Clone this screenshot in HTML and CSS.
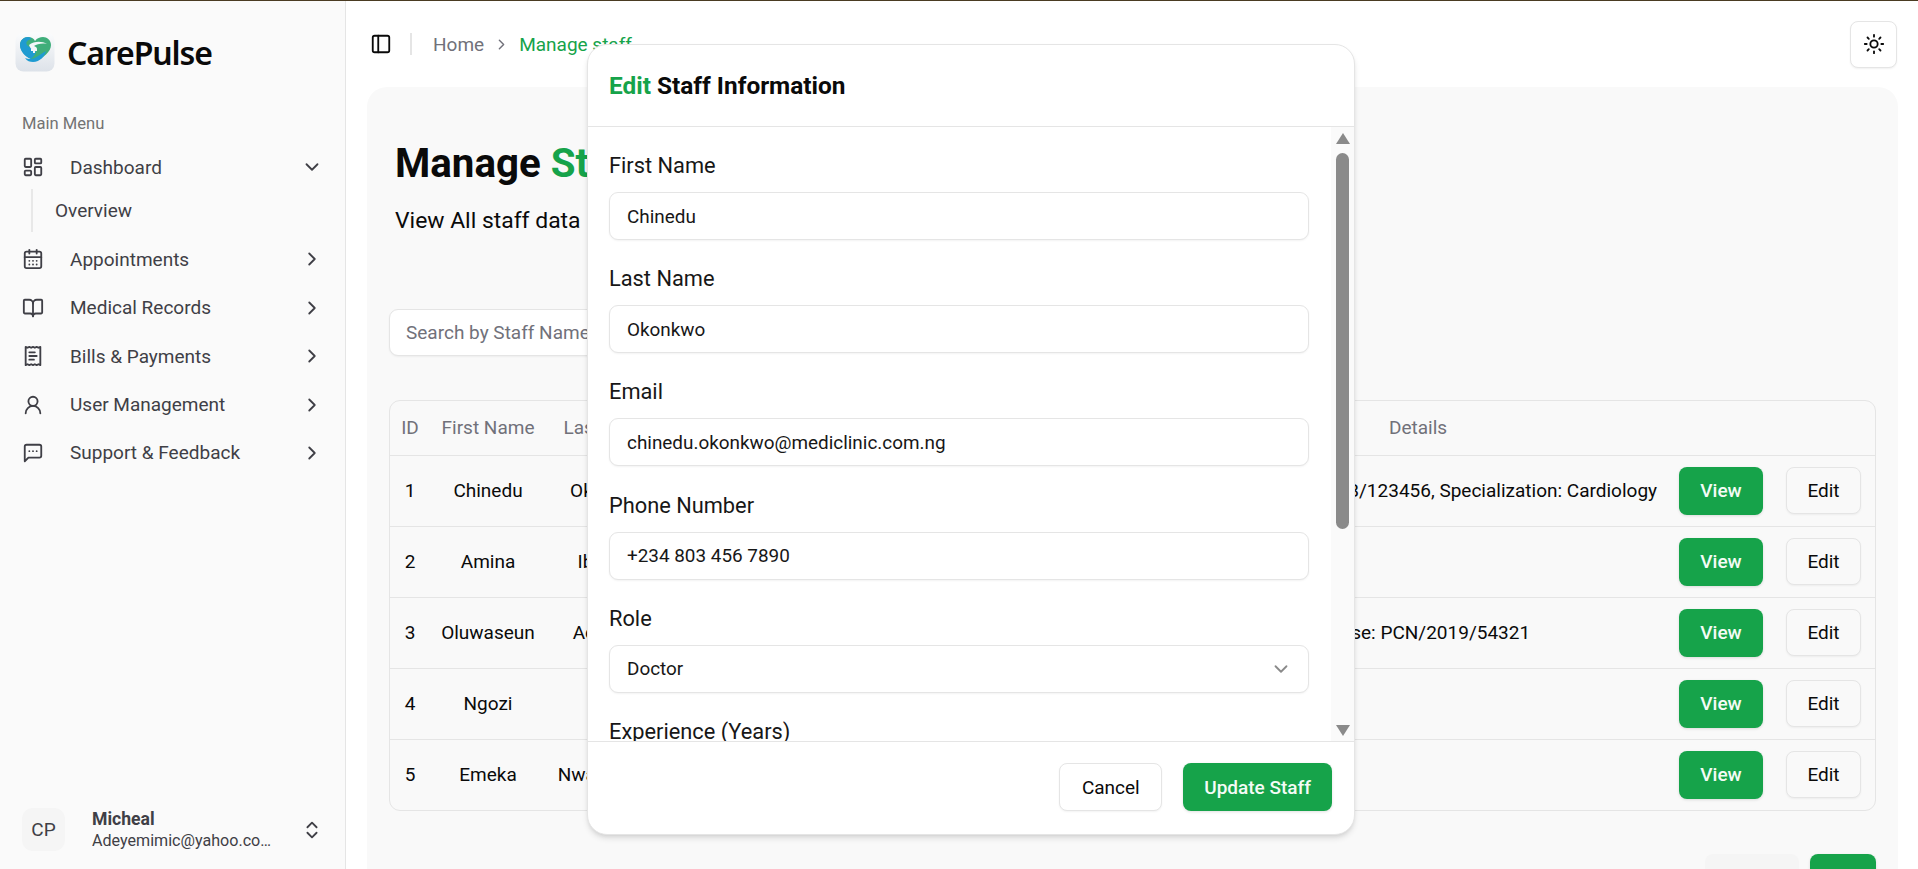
FILE: index.html
```html
<!DOCTYPE html>
<html lang="en">
<head>
    <meta charset="UTF-8">
    <meta name="viewport" content="width=device-width, initial-scale=1.0">
    <title>CarePulse - Manage staff</title>
    <link rel="stylesheet" href="styles.css">
</head>
<body>
    <div class="app">
        <aside class="sidebar">
            <div class="brand">
                <svg class="brand-logo" viewBox="0 0 40 40">
                    <defs>
                        <linearGradient id="tile" x1="0" y1="0" x2="0" y2="1">
                            <stop offset="0" stop-color="#fbfcfd"/>
                            <stop offset="1" stop-color="#dde2e9"/>
                        </linearGradient>
                    </defs>
                    <rect x="0.5" y="0.5" width="39" height="39" rx="8" fill="url(#tile)"/>
                    <path d="M20 29C13 26 5 20 5 13c0-5 4-8 8-8 3 0 6 1.500 7 4 2-3 5-4 8-4 4 0 8 3 8 8 0 7-8 13-16 16z" fill="#3fae7a"/>
                    <path d="M5 13c0-5 4-8 8-8 2 0 3 1 3 2-3 1-6 3-4 6 2 3 7 3 9 7-1 3-3 5-5 7C10 25 5 19 5 13z" fill="#1f9bd1"/>
                    <path d="M14 13c5-4 13-4 18-1-5-1-10 0-13 2 3 1 4 3 2 5-3 1-6-3-7-6z" fill="#f3f6f8"/>
                    <path d="M10 26c5 2 9 1 13-2l8-5c-1 5-6 11-13 11-3 0-6-1-8-4z" fill="#1f9bd1"/>
                    <path d="M18 15h2v2h2v2h-2v2h-2v-2h-2v-2h2z" fill="#f3f6f8"/>
                </svg>
                <span class="brand-name">CarePulse</span>
            </div>

            <p class="menu-title">Main Menu</p>
            <ul class="menu">
                <li>
                    <a class="menu-item">
                        <svg class="icon" viewBox="0 0 24 24"><rect x="3" y="3" width="7" height="9" rx="1"/><rect x="14" y="3" width="7" height="5" rx="1"/><rect x="14" y="12" width="7" height="9" rx="1"/><rect x="3" y="16" width="7" height="5" rx="1"/></svg>
                        <span class="menu-label">Dashboard</span>
                        <svg class="icon chevron" viewBox="0 0 24 24"><path d="m6 9 6 6 6-6"/></svg>
                    </a>
                    <div class="submenu"><a>Overview</a></div>
                </li>
                <li>
                    <a class="menu-item">
                        <svg class="icon" viewBox="0 0 24 24"><path d="M8 2v4"/><path d="M16 2v4"/><rect x="3" y="4" width="18" height="18" rx="2"/><path d="M3 10h18"/><path d="M8 14h.01"/><path d="M12 14h.01"/><path d="M16 14h.01"/><path d="M8 18h.01"/><path d="M12 18h.01"/><path d="M16 18h.01"/></svg>
                        <span class="menu-label">Appointments</span>
                        <svg class="icon chevron" viewBox="0 0 24 24"><path d="m9 18 6-6-6-6"/></svg>
                    </a>
                </li>
                <li>
                    <a class="menu-item">
                        <svg class="icon" viewBox="0 0 24 24"><path d="M12 7v14"/><path d="M3 18a1 1 0 0 1-1-1V4a1 1 0 0 1 1-1h5a4 4 0 0 1 4 4 4 4 0 0 1 4-4h5a1 1 0 0 1 1 1v13a1 1 0 0 1-1 1h-6a3 3 0 0 0-3 3 3 3 0 0 0-3-3z"/></svg>
                        <span class="menu-label">Medical Records</span>
                        <svg class="icon chevron" viewBox="0 0 24 24"><path d="m9 18 6-6-6-6"/></svg>
                    </a>
                </li>
                <li>
                    <a class="menu-item">
                        <svg class="icon" viewBox="0 0 24 24"><path d="M4 2v20l2-1 2 1 2-1 2 1 2-1 2 1 2-1 2 1V2l-2 1-2-1-2 1-2-1-2 1-2-1-2 1Z"/><path d="M14 8H8"/><path d="M16 12H8"/><path d="M13 16H8"/></svg>
                        <span class="menu-label">Bills &amp; Payments</span>
                        <svg class="icon chevron" viewBox="0 0 24 24"><path d="m9 18 6-6-6-6"/></svg>
                    </a>
                </li>
                <li>
                    <a class="menu-item">
                        <svg class="icon" viewBox="0 0 24 24"><circle cx="12" cy="8" r="5"/><path d="M20 21a8 8 0 0 0-16 0"/></svg>
                        <span class="menu-label">User Management</span>
                        <svg class="icon chevron" viewBox="0 0 24 24"><path d="m9 18 6-6-6-6"/></svg>
                    </a>
                </li>
                <li>
                    <a class="menu-item">
                        <svg class="icon" viewBox="0 0 24 24"><path d="M21 15a2 2 0 0 1-2 2H7l-4 4V5a2 2 0 0 1 2-2h14a2 2 0 0 1 2 2z"/><path d="M8 10h.01"/><path d="M12 10h.01"/><path d="M16 10h.01"/></svg>
                        <span class="menu-label">Support &amp; Feedback</span>
                        <svg class="icon chevron" viewBox="0 0 24 24"><path d="m9 18 6-6-6-6"/></svg>
                    </a>
                </li>
            </ul>

            <div class="account">
                <div class="avatar">CP</div>
                <div class="account-info">
                    <div class="account-name">Micheal</div>
                    <div class="account-email">Adeyemimic@yahoo.com</div>
                </div>
                <svg class="icon" viewBox="0 0 24 24"><path d="m7 15 5 5 5-5"/><path d="m7 9 5-5 5 5"/></svg>
            </div>
        </aside>

        <main class="main">
            <header class="topbar">
                <svg class="icon icon-dark" viewBox="0 0 24 24"><rect x="3" y="3" width="18" height="18" rx="2"/><path d="M9 3v18"/></svg>
                <span class="topbar-sep"></span>
                <nav class="crumbs">
                    <span>Home</span>
                    <svg class="icon crumb-arrow" viewBox="0 0 24 24"><path d="m9 18 6-6-6-6"/></svg>
                    <span class="crumb-current">Manage staff</span>
                </nav>
                <button class="theme-btn">
                    <svg class="icon icon-dark" viewBox="0 0 24 24"><circle cx="12" cy="12" r="4"/><path d="M12 2v2"/><path d="M12 20v2"/><path d="m4.930 4.930 1.410 1.410"/><path d="m17.660 17.660 1.410 1.410"/><path d="M2 12h2"/><path d="M20 12h2"/><path d="m6.340 17.660-1.410 1.410"/><path d="m19.070 4.930-1.410 1.410"/></svg>
                </button>
            </header>

            <section class="panel">
                <div class="page-head">
                    <h1>Manage <span class="green">Staff</span></h1>
                    <p>View All staff data</p>
                </div>
                <input class="search" type="text" placeholder="Search by Staff Name">

                <div class="table-wrap">
                    <table class="staff-table">
                        <colgroup>
                            <col class="col-id"><col class="col-first"><col class="col-last"><col class="col-email"><col class="col-role"><col class="col-details"><col>
                        </colgroup>
                        <thead>
                            <tr><th>ID</th><th>First Name</th><th>Last Name</th><th>Email</th><th>Role</th><th>Details</th><th></th></tr>
                        </thead>
                        <tbody>
                            <tr>
                                <td>1</td><td>Chinedu</td><td>Okonkwo</td><td>chinedu.okonkwo@mediclinic.com.ng</td><td>Doctor</td>
                                <td>License: MDCN/2018/123456, Specialization: Cardiology</td>
                                <td><div class="row-actions"><button class="btn btn-green">View</button><button class="btn btn-plain">Edit</button></div></td>
                            </tr>
                            <tr>
                                <td>2</td><td>Amina</td><td>Ibrahim</td><td>amina.ibrahim@mediclinic.com.ng</td><td>Nurse</td>
                                <td></td>
                                <td><div class="row-actions"><button class="btn btn-green">View</button><button class="btn btn-plain">Edit</button></div></td>
                            </tr>
                            <tr>
                                <td>3</td><td>Oluwaseun</td><td>Adebayo</td><td>oluwaseun.adebayo@mediclinic.com.ng</td><td>Pharmacist</td>
                                <td>License: PCN/2019/54321</td>
                                <td><div class="row-actions"><button class="btn btn-green">View</button><button class="btn btn-plain">Edit</button></div></td>
                            </tr>
                            <tr>
                                <td>4</td><td>Ngozi</td><td>Eze</td><td>ngozi.eze@mediclinic.com.ng</td><td>Admin</td>
                                <td></td>
                                <td><div class="row-actions"><button class="btn btn-green">View</button><button class="btn btn-plain">Edit</button></div></td>
                            </tr>
                            <tr>
                                <td>5</td><td>Emeka</td><td>Nwachukwu</td><td>emeka.nwachukwu@mediclinic.com.ng</td><td>Admin</td>
                                <td></td>
                                <td><div class="row-actions"><button class="btn btn-green">View</button><button class="btn btn-plain">Edit</button></div></td>
                            </tr>
                        </tbody>
                    </table>
                </div>

                <div class="pager">
                    <button class="btn pager-prev">Previous</button>
                    <button class="btn btn-green pager-next">Next</button>
                </div>
            </section>
        </main>

        <div class="modal">
            <div class="modal-head">
                <h2><span class="green">Edit</span> Staff Information</h2>
            </div>
            <div class="modal-body">
                <div class="field">
                    <label>First Name</label>
                    <div class="control">Chinedu</div>
                </div>
                <div class="field">
                    <label>Last Name</label>
                    <div class="control">Okonkwo</div>
                </div>
                <div class="field">
                    <label>Email</label>
                    <div class="control">chinedu.okonkwo@mediclinic.com.ng</div>
                </div>
                <div class="field">
                    <label>Phone Number</label>
                    <div class="control">+234 803 456 7890</div>
                </div>
                <div class="field">
                    <label>Role</label>
                    <div class="control control-select">
                        Doctor
                        <svg class="icon select-arrow" viewBox="0 0 24 24"><path d="m6 9 6 6 6-6"/></svg>
                    </div>
                </div>
                <div class="field">
                    <label>Experience (Years)</label>
                    <div class="control">12</div>
                </div>
                <div class="scrollbar">
                    <span class="scroll-up"></span>
                    <span class="scroll-thumb"></span>
                    <span class="scroll-down"></span>
                </div>
            </div>
            <div class="modal-foot">
                <button class="btn btn-plain btn-white">Cancel</button>
                <button class="btn btn-green">Update Staff</button>
            </div>
        </div>
    </div>
</body>
</html>
```

FILE: styles.css
```css
* { box-sizing: border-box; }
html, body { height: 100%; }
body {
    margin: 0;
    overflow: hidden;
    font-family: Roboto, "Liberation Sans", sans-serif;
    font-size: 19px;
    color: #0a0a0a;
    background: #fff;
}
p, h1, h2, ul { margin: 0; padding: 0; }
button { font-family: inherit; }
.green { color: #16a34a; }

.app {
    position: relative;
    display: flex;
    height: 100vh;
    border-top: 1px solid #4a3b22;
    overflow: hidden;
}

.icon {
    width: 22px;
    height: 22px;
    flex: none;
    fill: none;
    stroke: #3f3f46;
    stroke-width: 2;
    stroke-linecap: round;
    stroke-linejoin: round;
}
.icon-dark { stroke: #0a0a0a; }

/* sidebar */
.sidebar {
    width: 346px;
    flex: none;
    display: flex;
    flex-direction: column;
    background: #fafafa;
    border-right: 1px solid #e5e5e5;
    padding: 31px 22px 18px;
}
.brand { display: flex; align-items: center; margin-left: -7px; gap: 12px; height: 40px; }
.brand-logo { width: 40px; height: 40px; flex: none; }
.brand-name {
    font-family: "Noto Sans", "Open Sans", sans-serif;
    font-size: 32px;
    font-weight: 600;
    letter-spacing: -1.1px;
    color: #0a0a0a;
}
.menu-title { margin-top: 41px; font-size: 16.6px; line-height: 22px; color: #737373; }
.menu { list-style: none; margin-top: 12px; display: flex; flex-direction: column; gap: 8.4px; }
.menu-item {
    display: flex;
    align-items: center;
    height: 40px;
    color: #3f3f46;
}
.menu-label { margin-left: 26px; flex: 1; }
.chevron { width: 22px; height: 22px; }
.submenu {
    margin: 2px 0 -1px 9px;
    padding-left: 22px;
    height: 43px;
    line-height: 43px;
    border-left: 2px solid #e8e8e8;
    color: #3f3f46;
}
.account { margin-top: auto; display: flex; align-items: center; height: 43px; }
.avatar {
    width: 43px;
    height: 43px;
    flex: none;
    display: flex;
    align-items: center;
    justify-content: center;
    background: #f5f5f5;
    border-radius: 11px;
    color: #3f3f46;
}
.account-info { width: 181px; margin-left: 27px; line-height: 22px; color: #3f3f46; }
.account-name { font-weight: 700; font-size: 17.6px; }
.account-email {
    font-size: 16.1px;
    white-space: nowrap;
    overflow: hidden;
    text-overflow: ellipsis;
}
.account .icon { margin-left: 28px; }

/* main */
.main { flex: 1; min-width: 0; display: flex; flex-direction: column; }
.topbar {
    height: 86px;
    flex: none;
    display: flex;
    align-items: center;
    padding: 0 21px 0 24px;
}
.topbar-sep { width: 2px; height: 22px; margin: 0 21px 0 18px; background: #e5e5e5; }
.crumbs { display: flex; align-items: center; gap: 9px; margin-top: 1px; color: #71717a; }
.crumb-arrow { width: 17px; height: 17px; stroke: #71717a; }
.crumb-current { color: #16a34a; }
.theme-btn {
    margin-left: auto;
    width: 47px;
    height: 47px;
    display: flex;
    align-items: center;
    justify-content: center;
    background: #fff;
    border: 1px solid #e5e5e5;
    border-radius: 8px;
    box-shadow: 0 1px 2px rgba(0,0,0,0.06);
}
.panel {
    flex: 1;
    margin: 0 20px 0 21px;
    padding: 55px 22px 0;
    background: #f9f9f9;
    border-radius: 20px 20px 0 0;
}
.page-head { padding-left: 6px; }
.page-head h1 { font-size: 40.3px; line-height: 44px; font-weight: 700; }
.page-head p { margin-top: 20px; font-size: 22.9px; line-height: 30px; }
.search {
    display: block;
    width: 420px;
    height: 47px;
    margin-top: 73px;
    padding: 0 16px;
    font: inherit;
    background: #fff;
    border: 1px solid #e5e5e5;
    border-radius: 9px;
    box-shadow: 0 1px 2px rgba(0,0,0,0.05);
}
.search::placeholder { color: #71717a; }

.table-wrap {
    margin-top: 44px;
    border: 1px solid #e5e5e5;
    border-radius: 11px;
    overflow: hidden;
}
.staff-table { width: 100%; table-layout: fixed; border-collapse: collapse; }
.col-id { width: 40px; }
.col-first { width: 116px; }
.col-last { width: 127px; }
.col-email { width: 327px; }
.col-role { width: 169px; }
.col-details { width: 498px; }
.staff-table th {
    height: 54px;
    font-weight: 400;
    color: #71717a;
    text-align: center;
    border-bottom: 1px solid #e5e5e5;
    white-space: nowrap;
}
.staff-table td {
    height: 71px;
    text-align: center;
    border-bottom: 1px solid #e5e5e5;
    white-space: nowrap;
}
.staff-table tbody tr:last-child td { border-bottom: 0; }
.row-actions { display: flex; justify-content: flex-end; gap: 23px; padding-right: 13px; }

.btn {
    height: 48px;
    padding: 0 21px;
    font-size: 19px;
    font-weight: 500;
    border-radius: 8px;
    border: 1px solid transparent;
    white-space: nowrap;
}
.btn-green {
    background: #16a34a;
    color: #f4fbf6;
    box-shadow: 0 1px 3px rgba(0,0,0,0.12);
}
.btn-plain {
    background: #f9f9f9;
    color: #0a0a0a;
    font-weight: 400;
    border-color: #e5e5e5;
    box-shadow: 0 1px 2px rgba(0,0,0,0.05);
}
.row-actions .btn-green { width: 84px; padding: 0; }
.row-actions .btn-plain { width: 75px; height: 47px; padding: 0; }
.btn-white { background: #fff; padding: 0 21.5px; }
.modal-foot .btn-green { padding: 0 20px; }

.pager { margin-top: 43px; display: flex; justify-content: flex-end; gap: 11px; }
.pager-prev { width: 94px; background: #f5f5f5; color: #a3a3a3; }
.pager-next { width: 66px; padding: 0; }

/* edit dialog, sits over the page */
.modal {
    position: absolute;
    left: 587px;
    top: 43px;
    width: 768px;
    height: 791px;
    display: flex;
    flex-direction: column;
    background: #fff;
    border: 1px solid #e5e5e5;
    border-radius: 20px;
    box-shadow: 0 4px 6px -1px rgba(0,0,0,0.12), 0 2px 4px -2px rgba(0,0,0,0.1);
    overflow: hidden;
}
.modal-head {
    height: 82px;
    flex: none;
    display: flex;
    align-items: center;
    padding: 0 21px;
    border-bottom: 1px solid #e5e5e5;
}
.modal-head h2 { font-size: 24.4px; font-weight: 700; }
.modal-body {
    position: relative;
    flex: 1;
    min-height: 0;
    overflow: hidden;
    padding: 20px 45px 0 21px;
}
.field { height: 113.2px; }
.field label { display: block; line-height: 38px; font-size: 21.8px; color: #171717; }
.control {
    display: flex;
    align-items: center;
    height: 48px;
    margin-top: 7px;
    padding: 0 17px;
    font-size: 18.9px;
    color: #171717;
    background: #fff;
    border: 1px solid #e5e5e5;
    border-radius: 9px;
    box-shadow: 0 1px 2px rgba(0,0,0,0.05);
}
.control-select { justify-content: space-between; padding-right: 16px; }
.select-arrow { stroke: #8a8a8a; }
.scrollbar {
    position: absolute;
    top: 0;
    right: 0;
    bottom: 0;
    width: 23px;
    background: #fafafa;
}
.scroll-up, .scroll-down {
    position: absolute;
    left: 5px;
    width: 0;
    height: 0;
    border-left: 7px solid transparent;
    border-right: 7px solid transparent;
}
.scroll-up { top: 6px; border-bottom: 11px solid #8a8a8a; }
.scroll-down { bottom: 5px; border-top: 11px solid #8a8a8a; }
.scroll-thumb {
    position: absolute;
    left: 5px;
    top: 26px;
    width: 13px;
    height: 376px;
    background: #8a8a8a;
    border-radius: 7px;
}
.modal-foot {
    height: 93px;
    flex: none;
    display: flex;
    justify-content: flex-end;
    align-items: flex-start;
    gap: 21px;
    padding: 21px 22px 0 0;
    border-top: 1px solid #e5e5e5;
}
```
